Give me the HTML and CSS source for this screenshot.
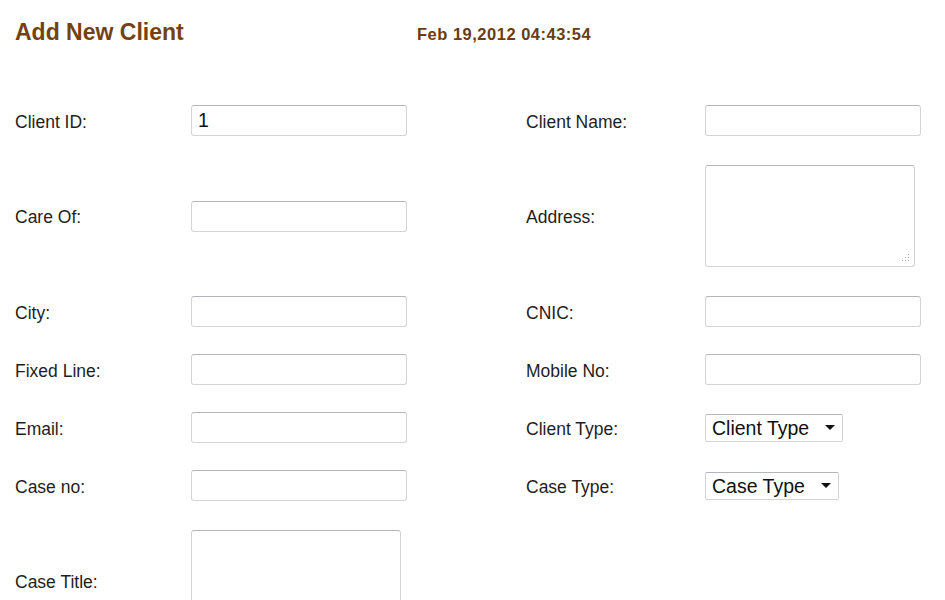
FILE: index.html
```html
<!DOCTYPE html>
<html>
<head>
<meta charset="utf-8">
<title>Add New Client</title>
<link rel="stylesheet" href="styles.css">
</head>
<body>
<div class="page">
  <div class="header">
    <h1 class="title">Add New Client</h1>
    <span class="date">Feb 19,2012 04:43:54</span>
  </div>
  <form class="form">
    <label class="label">Client ID:</label>
    <input class="field" type="text" value="1">
    <label class="label">Client Name:</label>
    <input class="field" type="text">

    <label class="label">Care Of:</label>
    <input class="field" type="text">
    <label class="label">Address:</label>
    <textarea class="area"></textarea>

    <label class="label">City:</label>
    <input class="field" type="text">
    <label class="label">CNIC:</label>
    <input class="field" type="text">

    <label class="label">Fixed Line:</label>
    <input class="field" type="text">
    <label class="label">Mobile No:</label>
    <input class="field" type="text">

    <label class="label">Email:</label>
    <input class="field" type="text">
    <label class="label">Client Type:</label>
    <div class="pick-cell"><select class="pick"><option>Client Type</option></select></div>

    <label class="label">Case no:</label>
    <input class="field" type="text">
    <label class="label">Case Type:</label>
    <div class="pick-cell"><select class="pick"><option>Case Type</option></select></div>

    <label class="label">Case Title:</label>
    <textarea class="area"></textarea>
    <span></span>
    <span></span>
  </form>
</div>
</body>
</html>
```

FILE: styles.css
```css
html, body {
  margin: 0;
  padding: 0;
  background: #ffffff;
}

body {
  font-family: "Liberation Sans", Arial, sans-serif;
  color: #1e1e1e;
}

.page {
  padding: 19px 15px 0 15px;
}

.header {
  display: flex;
  align-items: baseline;
  height: 26px;
}

.title {
  margin: 0;
  width: 402px;
  font-size: 23px;
  line-height: 26px;
  font-weight: bold;
  color: #74420f;
}

.date {
  font-size: 16.5px;
  font-weight: bold;
  color: #6a3c10;
  letter-spacing: 0.5px;
}

.form {
  margin-top: 60px;
  display: grid;
  grid-template-columns: 176px 335px 179px 1fr;
  grid-template-rows: 31px 106px 31px 31px 31px 31px 106px;
  row-gap: 27px;
  align-items: center;
}

.label {
  font-size: 17.5px;
  color: #1e1e1e;
  padding-top: 3px;
}

.field {
  box-sizing: border-box;
  width: 216px;
  height: 31px;
  margin: 0;
  padding: 0 6px;
  border: 1px solid #d4d4d8;
  border-top-color: #b4b4bc;
  border-radius: 3px;
  font-family: "Liberation Sans", Arial, sans-serif;
  font-size: 19.5px;
  color: #111;
  background: #fff;
}

.area {
  box-sizing: border-box;
  width: 210px;
  height: 102px;
  margin: 0;
  padding: 4px;
  border: 1px solid #d4d4d8;
  border-top-color: #b4b4bc;
  border-radius: 3px;
  resize: none;
  font-family: "Liberation Sans", Arial, sans-serif;
  background-color: #fff;
  background-image:
    linear-gradient(#a8a8a8, #a8a8a8),
    linear-gradient(#a8a8a8, #a8a8a8),
    linear-gradient(#a8a8a8, #a8a8a8),
    linear-gradient(#a8a8a8, #a8a8a8),
    linear-gradient(#a8a8a8, #a8a8a8),
    linear-gradient(#a8a8a8, #a8a8a8);
  background-size: 1px 1px;
  background-repeat: no-repeat;
  background-position:
    right 5px bottom 5px,
    right 8px bottom 5px,
    right 11px bottom 5px,
    right 5px bottom 8px,
    right 8px bottom 8px,
    right 5px bottom 11px;
}

.pick-cell {
  display: flex;
  align-items: center;
}

.pick {
  -webkit-appearance: none;
  appearance: none;
  box-sizing: border-box;
  height: 28px;
  margin: 0;
  padding: 0 32px 0 6px;
  border: 1px solid #d4d4d8;
  border-top-color: #b4b4bc;
  border-radius: 2px;
  font-family: "Liberation Sans", Arial, sans-serif;
  font-size: 19.5px;
  color: #111;
  background-color: #fff;
  background-image: url("data:image/svg+xml;utf8,<svg xmlns='http://www.w3.org/2000/svg' width='10' height='5'><path d='M0 0H10L5 5Z' fill='%23111'/></svg>");
  background-repeat: no-repeat;
  background-position: right 7px center;
}
```
